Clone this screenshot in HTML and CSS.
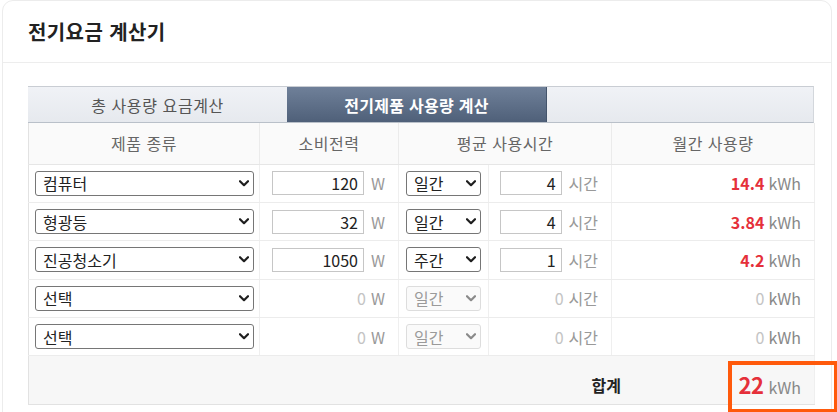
FILE: index.html
```html
<!DOCTYPE html>
<html lang="ko">
<head>
<meta charset="utf-8">
<title>전기요금 계산기</title>
<link rel="stylesheet" href="styles.css">
</head>
<body>
<section class="card">
  <header class="card-head">
    <h1 class="title">전기요금 계산기</h1>
  </header>
  <div class="card-body">
    <div class="calc">
      <nav class="tabs">
        <div class="tab">총 사용량 요금계산</div>
        <div class="tab tab-active">전기제품 사용량 계산</div>
        <div class="tab"></div>
      </nav>
      <table class="grid">
        <colgroup>
          <col class="c-prod"><col class="c-power"><col class="c-period"><col class="c-hours"><col class="c-month">
        </colgroup>
        <thead>
          <tr>
            <th>제품 종류</th>
            <th>소비전력</th>
            <th colspan="2">평균 사용시간</th>
            <th>월간 사용량</th>
          </tr>
        </thead>
        <tbody>
          <tr>
            <td class="td-prod"><div class="sel sel-prod"><span>컴퓨터</span><svg class="chev" viewBox="0 0 10 7"><path d="M1 1.2 L5 5.2 L9 1.2"/></svg></div></td>
            <td><div class="cell-r"><span class="box box-power">120</span><span class="unit">W</span></div></td>
            <td class="td-period"><div class="sel sel-period"><span>일간</span><svg class="chev" viewBox="0 0 10 7"><path d="M1 1.2 L5 5.2 L9 1.2"/></svg></div></td>
            <td><div class="cell-r"><span class="box box-hours">4</span><span class="unit">시간</span></div></td>
            <td><div class="cell-r cell-m"><b class="val">14.4</b><span class="unit-k">kWh</span></div></td>
          </tr>
          <tr>
            <td class="td-prod"><div class="sel sel-prod"><span>형광등</span><svg class="chev" viewBox="0 0 10 7"><path d="M1 1.2 L5 5.2 L9 1.2"/></svg></div></td>
            <td><div class="cell-r"><span class="box box-power">32</span><span class="unit">W</span></div></td>
            <td class="td-period"><div class="sel sel-period"><span>일간</span><svg class="chev" viewBox="0 0 10 7"><path d="M1 1.2 L5 5.2 L9 1.2"/></svg></div></td>
            <td><div class="cell-r"><span class="box box-hours">4</span><span class="unit">시간</span></div></td>
            <td><div class="cell-r cell-m"><b class="val">3.84</b><span class="unit-k">kWh</span></div></td>
          </tr>
          <tr>
            <td class="td-prod"><div class="sel sel-prod"><span>진공청소기</span><svg class="chev" viewBox="0 0 10 7"><path d="M1 1.2 L5 5.2 L9 1.2"/></svg></div></td>
            <td><div class="cell-r"><span class="box box-power">1050</span><span class="unit">W</span></div></td>
            <td class="td-period"><div class="sel sel-period"><span>주간</span><svg class="chev" viewBox="0 0 10 7"><path d="M1 1.2 L5 5.2 L9 1.2"/></svg></div></td>
            <td><div class="cell-r"><span class="box box-hours">1</span><span class="unit">시간</span></div></td>
            <td><div class="cell-r cell-m"><b class="val">4.2</b><span class="unit-k">kWh</span></div></td>
          </tr>
          <tr>
            <td class="td-prod"><div class="sel sel-prod"><span>선택</span><svg class="chev" viewBox="0 0 10 7"><path d="M1 1.2 L5 5.2 L9 1.2"/></svg></div></td>
            <td><div class="cell-r"><span class="zero">0</span><span class="unit unit-near">W</span></div></td>
            <td class="td-period"><div class="sel sel-period sel-off"><span>일간</span><svg class="chev" viewBox="0 0 10 7"><path d="M1 1.2 L5 5.2 L9 1.2"/></svg></div></td>
            <td><div class="cell-r"><span class="zero">0</span><span class="unit unit-near">시간</span></div></td>
            <td><div class="cell-r cell-m"><span class="zero">0</span><span class="unit-k">kWh</span></div></td>
          </tr>
          <tr>
            <td class="td-prod"><div class="sel sel-prod"><span>선택</span><svg class="chev" viewBox="0 0 10 7"><path d="M1 1.2 L5 5.2 L9 1.2"/></svg></div></td>
            <td><div class="cell-r"><span class="zero">0</span><span class="unit unit-near">W</span></div></td>
            <td class="td-period"><div class="sel sel-period sel-off"><span>일간</span><svg class="chev" viewBox="0 0 10 7"><path d="M1 1.2 L5 5.2 L9 1.2"/></svg></div></td>
            <td><div class="cell-r"><span class="zero">0</span><span class="unit unit-near">시간</span></div></td>
            <td><div class="cell-r cell-m"><span class="zero">0</span><span class="unit-k">kWh</span></div></td>
          </tr>
        </tbody>
        <tfoot>
          <tr>
            <td colspan="5" class="td-total">
              <div class="total">
                <span class="total-label">합계</span>
                <span class="total-value"><b class="val val-big">22</b><span class="unit-k">kWh</span><span class="highlight"></span></span>
              </div>
            </td>
          </tr>
        </tfoot>
      </table>
    </div>
  </div>
</section>
</body>
</html>
```
FILE: styles.css
```css
* { box-sizing: border-box; }

html, body {
  margin: 0;
  padding: 0;
  background: #ffffff;
}

body {
  font-family: "Noto Sans CJK KR", "Noto Sans", sans-serif;
  color: #333;
  font-size: 16px;
  overflow: hidden;
}

.card {
  margin-left: 2px;
  width: 830px;
  border: 1px solid #ececec;
  border-radius: 11px;
  background: #fff;
  min-height: 430px;
}

.card-head {
  height: 62px;
  padding-left: 25px;
  display: flex;
  align-items: center;
  border-bottom: 1px solid #ededed;
}

.title {
  margin: 0;
  font-size: 20px;
  font-weight: 700;
  color: #222;
  letter-spacing: 0.4px;
  line-height: 1;
}

.card-body {
  padding: 23px 0 0 25px;
}

.calc {
  width: 786px;
}

.tabs {
  display: grid;
  grid-template-columns: 259px 260px 1fr;
  height: 37px;
  border-top: 1px solid #c9cdd3;
  border-right: 1px solid #d3d7dc;
  border-bottom: 1px solid #b9c0c9;
}

.tab {
  display: flex;
  align-items: center;
  justify-content: center;
  background: linear-gradient(#f0f2f6, #e6e9ee);
  color: #555;
  font-size: 16px;
  letter-spacing: 0.6px;
}

.tab-active {
  background: linear-gradient(#6f8099, #4f6079);
  color: #fff;
  font-weight: 700;
  letter-spacing: 0.3px;
  border-right: 1px solid #44546b;
}

.grid {
  width: 786px;
  border-collapse: collapse;
  table-layout: fixed;
  border-left: 1px solid #e2e2e2;
  border-right: 1px solid #e2e2e2;
}

.c-prod { width: 231px; }
.c-power { width: 139px; }
.c-period { width: 90px; }
.c-hours { width: 123px; }
.c-month { width: 203px; }

th {
  height: 41px;
  padding: 0;
  background: #fafafa;
  color: #666;
  font-weight: 400;
  font-size: 16px;
  letter-spacing: 0.5px;
  border-right: 1px solid #ebebeb;
  border-bottom: 1px solid #e6e6e6;
}

td {
  height: 38.4px;
  padding: 0;
  border-right: 1px solid #efefef;
  border-bottom: 1px solid #ececec;
  vertical-align: middle;
  white-space: nowrap;
}

.td-prod { padding-left: 6px; }
.td-period { padding-left: 7px; }

.cell-r {
  display: flex;
  align-items: center;
  justify-content: flex-end;
  padding-right: 13px;
  height: 26px;
  line-height: 1;
}

.cell-m {
  align-items: baseline;
  gap: 4px;
  padding-top: 5px;
}

.sel {
  display: flex;
  align-items: center;
  justify-content: space-between;
  height: 25px;
  padding: 0 3px 0 7px;
  border: 1px solid #767676;
  border-radius: 3px;
  background: #fff;
  color: #222;
  font-size: 16px;
  line-height: 1;
}

.sel-prod { width: 219px; }
.sel-period { width: 75px; }

.sel-off {
  border-color: #dddddd;
  background: #fafafa;
  color: #9a9a9a;
}

.chev {
  width: 10px;
  height: 7px;
  margin-right: 1px;
  flex: none;
}

.chev path {
  fill: none;
  stroke: #1e1e1e;
  stroke-width: 2.2;
  stroke-linecap: round;
  stroke-linejoin: round;
}

.sel-off .chev path { stroke: #8a8a8a; }

.box {
  display: block;
  height: 24px;
  line-height: 22px;
  padding-right: 5px;
  border: 1px solid #c6c6c6;
  text-align: right;
  color: #222;
  font-size: 16px;
}

.box-power { width: 92px; }
.box-hours { width: 62px; }

.unit {
  margin-left: 7px;
  color: #999;
  font-size: 16px;
}

.unit-near { margin-left: 5px; }

.zero {
  color: #c4c4c4;
  font-size: 16px;
}

.val {
  color: #e5303a;
  font-weight: 700;
  font-size: 16px;
}

.unit-k {
  color: #888;
  font-size: 16px;
}

.td-total {
  height: 49px;
  background: #f7f7f7;
  border-bottom: 1px solid #e2e2e2;
}

.total {
  display: flex;
  justify-content: flex-end;
  align-items: stretch;
  height: 48px;
}

.total-label {
  display: flex;
  align-items: center;
  padding-top: 9px;
  font-weight: 700;
  color: #222;
  font-size: 16px;
}

.total-value {
  position: relative;
  display: flex;
  align-items: baseline;
  justify-content: flex-end;
  gap: 5px;
  width: 193px;
  padding-right: 13px;
  padding-top: 12px;
}

.val-big {
  font-size: 22px;
  letter-spacing: -0.5px;
}

.highlight {
  position: absolute;
  right: -24px;
  top: 5px;
  width: 110px;
  height: 52px;
  border: 4px solid #ff5a0c;
}
```
